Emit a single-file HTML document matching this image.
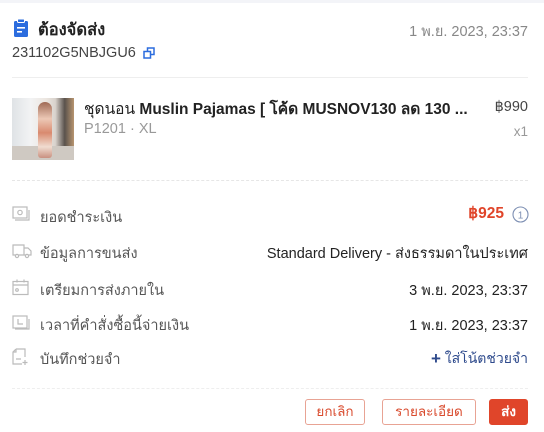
<!DOCTYPE html>
<html><head><meta charset="utf-8"><style>
*{margin:0;padding:0;box-sizing:border-box}
body{width:544px;height:432px;background:#fff;font-family:"Liberation Sans","Noto Sans CJK SC",sans-serif;position:relative;overflow:hidden;color:#222}
.a{position:absolute;white-space:nowrap}
.band{position:absolute;left:0;top:0;width:544px;height:3px;background:#f3f4f8}
.lab{left:40px;font-size:14.5px;color:#555}
.val{right:16px;font-size:14.5px;color:#222}
.ic{position:absolute;left:12px}
.btn{position:absolute;top:399px;height:26px;border:1px solid #e8a394;border-radius:3px;color:#d94b2e;font-size:13.5px;line-height:24px;text-align:center}
</style></head><body>
<div class="band"></div>
<svg class="ic" style="top:19px;left:14px" width="14" height="18" viewBox="0 0 14 18"><rect x="0" y="2" width="14" height="16" rx="1.5" fill="#2b6cde"/><rect x="3.5" y="0" width="7" height="3.5" rx="1" fill="#2b6cde" stroke="#fff" stroke-width="1"/><rect x="3" y="8" width="8" height="1.6" fill="#fff"/><rect x="3" y="12" width="5" height="1.6" fill="#fff"/></svg>
<div class="a" style="left:38px;top:17px;font-size:16.5px;font-weight:bold;color:#222">ต้องจัดส่ง</div>
<div class="a" style="right:16px;top:20px;font-size:14.5px;color:#888">1 พ.ย. 2023, 23:37</div>
<div class="a" style="left:12px;top:45px;font-size:14.5px;color:#444">231102G5NBJGU6</div>
<svg class="a" style="left:143px;top:47px" width="12" height="12" viewBox="0 0 12 12" fill="none" stroke="#2b6cde" stroke-width="1.5"><rect x="1" y="4.5" width="6.5" height="6.5"/><path d="M4.5 4.5V1h6.5v6.5H7.5"/></svg>
<div class="a" style="left:12px;top:77px;width:516px;height:1px;background:#eee"></div>
<div class="a" style="left:12px;top:98px;width:62px;height:62px;overflow:hidden;background:linear-gradient(90deg,#dfe3e6 0,#f2f3f4 30%,#ece6e0 55%,#d8d2cc 70%,#5a524c 85%,#b89570 100%)">
<div style="position:absolute;left:0;bottom:0;width:62px;height:14px;background:#cfc9c2"></div>
<div style="position:absolute;left:26px;top:4px;width:14px;height:56px;border-radius:7px 7px 3px 3px;background:linear-gradient(#a06a55,#ecc8b6 30%,#d98a6f 55%,#f0dcd0 80%,#c99080)"></div></div>
<div class="a" style="left:84px;top:96px;font-size:15.5px;color:#222">ชุดนอน <span style="font-weight:bold">Muslin Pajamas [ โค้ด MUSNOV130 ลด 130 ...</span></div>
<div class="a" style="right:16px;top:99px;font-size:14.5px;color:#444">฿990</div>
<div class="a" style="left:84px;top:121px;font-size:14.5px;color:#999">P1201 · XL</div>
<div class="a" style="right:16px;top:124px;font-size:13.5px;color:#999">x1</div>
<div class="a" style="left:12px;top:180px;width:516px;border-top:1px dashed #e6e6e6"></div>

<svg class="ic" style="top:206px" width="18" height="16" viewBox="0 0 18 16" fill="none" stroke="#bbb" stroke-width="1.2"><rect x="1" y="1" width="14" height="11"/><circle cx="8" cy="6.5" r="2.2"/><path d="M17 4v10H3"/></svg>
<div class="a lab" style="top:206px">ยอดชำระเงิน</div>
<div class="a" style="right:40px;top:204px;font-size:15.5px;font-weight:bold;color:#e0452a">฿925</div>
<svg class="a" style="right:15px;top:206px" width="17" height="17" viewBox="0 0 17 17"><circle cx="8.5" cy="8.5" r="7.5" fill="none" stroke="#7d8fb3" stroke-width="1.1"/><text x="8.5" y="12.5" text-anchor="middle" font-size="10" fill="#7d8fb3" font-family="Liberation Sans">1</text></svg>

<svg class="ic" style="top:243px" width="20" height="16" viewBox="0 0 20 16" fill="none" stroke="#bbb" stroke-width="1.2"><path d="M1 2h11v10H1z M12 5h4l3 3v4h-7"/><circle cx="5" cy="13" r="1.6" fill="#fff"/><circle cx="15" cy="13" r="1.6" fill="#fff"/></svg>
<div class="a lab" style="top:242px">ข้อมูลการขนส่ง</div>
<div class="a val" style="top:242px">Standard Delivery - ส่งธรรมดาในประเทศ</div>

<svg class="ic" style="top:279px" width="18" height="17" viewBox="0 0 18 17" fill="none" stroke="#bbb" stroke-width="1.2"><rect x="1" y="2.5" width="15" height="13"/><path d="M1 6h15M5 0.5v3M12 0.5v3"/><circle cx="5" cy="11" r="1.3"/></svg>
<div class="a lab" style="top:279px">เตรียมการส่งภายใน</div>
<div class="a val" style="top:279px">3 พ.ย. 2023, 23:37</div>

<svg class="ic" style="top:315px" width="18" height="16" viewBox="0 0 18 16" fill="none" stroke="#bbb" stroke-width="1.2"><rect x="1" y="1" width="14" height="12"/><path d="M6 4v5h5M17 4v10H3"/></svg>
<div class="a lab" style="top:314px">เวลาที่คำสั่งซื้อนี้จ่ายเงิน</div>
<div class="a val" style="top:314px">1 พ.ย. 2023, 23:37</div>

<svg class="ic" style="top:348px" width="18" height="18" viewBox="0 0 18 18" fill="none" stroke="#bbb" stroke-width="1.2"><path d="M4 1h9v8M4 1L1 4v12h9M4 1v3H1M4 11h5M13 12v5M10.5 14.5h5"/></svg>
<div class="a lab" style="top:348px">บันทึกช่วยจำ</div>
<div class="a" style="right:16px;top:348px;font-size:14px;color:#2e4a8c"><span style="font-size:17px;font-weight:bold;position:relative;top:1px">+</span> ใส่โน้ตช่วยจำ</div>

<div class="a" style="left:12px;top:388px;width:516px;border-top:1px dashed #eee"></div>
<div class="btn" style="left:305px;width:60px">ยกเลิก</div>
<div class="btn" style="left:382px;width:94px">รายละเอียด</div>
<div class="btn" style="left:489px;width:39px;background:#e0452a;border-color:#e0452a;color:#fff;font-weight:bold">ส่ง</div>
</body></html>
